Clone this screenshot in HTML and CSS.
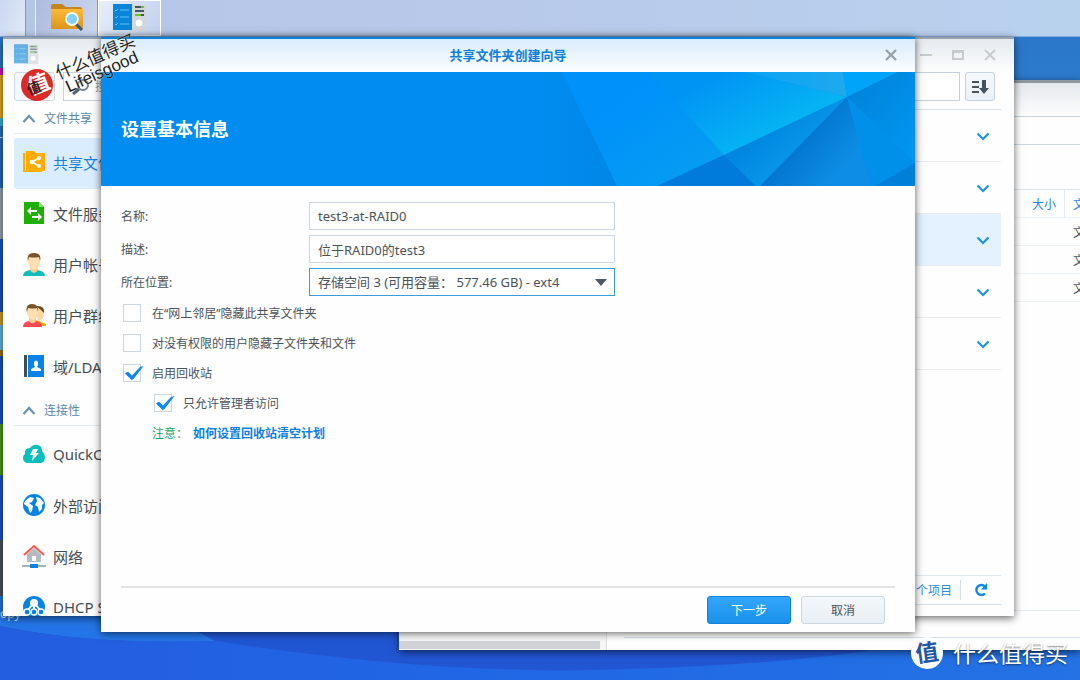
FILE: index.html
```html
<!DOCTYPE html>
<html lang="zh-CN">
<head>
<meta charset="utf-8">
<title>共享文件夹创建向导</title>
<link rel="stylesheet" href="styles.css">
</head>
<body>
<svg class="defs" aria-hidden="true">
  <defs>
    <linearGradient id="folder" x1="0" y1="0" x2="0" y2="1"><stop offset="0" stop-color="#fcb93a"/><stop offset="1" stop-color="#dd951a"/></linearGradient>
    <symbol id="panel" viewBox="0 0 34 28">
      <rect x="17" y="1" width="16" height="26" fill="#d3d7da"/>
      <rect x="0" y="0" width="19" height="26" fill="#0a86d8"/>
      <path d="M2 6l1 1 2-2M2 13l1 1 2-2M2 20l1 1 2-2M7 6h9M7 13h9M7 20h9" stroke="#5cc3f3" stroke-width="1" fill="none"/>
      <path d="M22 3h9M22 7h9M22 11h9" stroke="#485661" stroke-width="2"/>
      <path d="M28 3h3M22 11h6" stroke="#6cc420" stroke-width="2"/>
      <circle cx="26" cy="19" r="4" fill="#fff" stroke="#b9bec2" stroke-width=".6"/>
    </symbol>
    <symbol id="down" viewBox="0 0 14 9"><path d="M1.500 1.500L7 7l5.500-5.500" fill="none" stroke="#1b93ea" stroke-width="2.200"/></symbol>
    <symbol id="up" viewBox="0 0 14 9"><path d="M1.500 8L7 2l5.500 6" fill="none" stroke="#6e93ae" stroke-width="2.200"/></symbol>
    <symbol id="tick" viewBox="0 0 22 20"><path d="M2 9.500q1.500-2 3.500-1.500l3.500 3.500L17 3l3.500-1L10.500 15 8.500 16z" fill="#0d88ee"/></symbol>
  </defs>
</svg>

<div class="desktop">
  <svg class="wallpaper" viewBox="0 0 1080 680" preserveAspectRatio="none" aria-hidden="true">
    <defs>
      <linearGradient id="sky" x1="0" y1="0" x2="0" y2="1"><stop offset="0" stop-color="#2874c8"/><stop offset=".12" stop-color="#2d7bcd"/><stop offset=".4" stop-color="#1552c4"/><stop offset="1" stop-color="#2256d4"/></linearGradient>
      <linearGradient id="sea" x1="0" y1="0" x2="1" y2="0"><stop offset="0" stop-color="#235de0"/><stop offset=".5" stop-color="#2068e5"/><stop offset="1" stop-color="#2472e4"/></linearGradient>
    </defs>
    <rect width="1080" height="680" fill="url(#sky)"/>
    <path d="M0 590H120L215 641Q90 645 0 626z" fill="#2476e8"/>
    <path d="M0 626Q90 645 215 641Q430 674 600 670Q760 666 860 652Q980 630 1080 630V680H0z" fill="url(#sea)"/>
    <g>
      <path d="M0 68h6v7H0z" fill="#d010c8"/><path d="M0 75h6v43H0z" fill="#e8a91c"/><path d="M0 118h6v8H0z" fill="#37b5dc"/>
      <path d="M0 137h6v1H0z" fill="#cfe0f5"/><path d="M0 188h6v51H0z" fill="#9aa5b2"/><path d="M0 312h6v13H0z" fill="#d59a28"/><path d="M0 325h6v25H0z" fill="#66b7e6"/>
      <path d="M0 350h6v6H0z" fill="#a37217"/><path d="M0 424h6v51H0z" fill="#4b9c17"/><path d="M0 540h6v56H0z" fill="#4b5361"/>
    </g>
  </svg>
  <span class="desk-label">opy</span>

  <nav class="taskbar" aria-label="任务栏">
    <button class="task start" aria-label="主菜单"></button>
    <button class="task folder-task" aria-label="File Station">
      <svg width="34" height="28" viewBox="0 0 34 28"><path d="M1 3q0-2 2-2h9l4 3h14q2 0 2 2v18q0 2-2 2H3q-2 0-2-2z" fill="#c9831b"/><path d="M1 6h32v18q0 2-2 2H3q-2 0-2-2z" fill="url(#folder)"/><path d="M26 21l6 6" stroke="#3e5a72" stroke-width="3"/><circle cx="22" cy="16" r="6" fill="#7fd3f6" stroke="#f3f7f9" stroke-width="1.800"/></svg>
    </button>
    <button class="task active" aria-label="控制面板"><svg width="34" height="28"><use href="#panel"/></svg></button>
  </nav>

  <section class="window files">
    <div class="files-title"></div>
    <div class="files-body">
      <div class="tree"><div class="scroll"></div></div>
      <div class="files-main">
        <div class="path"></div>
        <div class="tools"></div>
        <table class="list">
          <thead><tr><th class="grow"></th><th class="size">大小</th><th class="type">文件类型</th></tr></thead>
          <tbody>
            <tr><td></td><td></td><td>文件夹</td></tr>
            <tr><td></td><td></td><td>文件夹</td></tr>
            <tr><td></td><td></td><td>文件夹</td></tr>
          </tbody>
        </table>
        <div class="files-foot"></div>
      </div>
    </div>
  </section>

  <section class="window control">
    <header class="control-title">
      <svg class="faded" width="25" height="21"><use href="#panel"/></svg>
      <div class="win-buttons">
        <button aria-label="最小化"><svg width="14" height="14"><path d="M1 7h12" stroke="#c7cbce" stroke-width="2"/></svg></button>
        <button aria-label="最大化"><svg width="14" height="14"><path d="M2 3h10v8H2zM1 4h12" fill="none" stroke="#c7cbce" stroke-width="2"/></svg></button>
        <button aria-label="关闭窗口"><svg width="14" height="14"><path d="M2 2l10 10M12 2L2 12" stroke="#c7cbce" stroke-width="2"/></svg></button>
      </div>
    </header>
    <div class="control-body">
      <aside class="side">
        <div class="side-search">
          <button class="home" aria-label="主页"><svg width="16" height="16"><path d="M8 2L1 8h2v6h4v-4h3v4h4V8h1z" fill="#48545e"/></svg></button>
          <label class="find"><svg width="20" height="18" viewBox="0 0 20 18"><circle cx="12" cy="7" r="5" fill="none" stroke="#73808a" stroke-width="2"/><path d="M8 11l-6 5" stroke="#56626c" stroke-width="3"/></svg><input type="text" placeholder="搜索" aria-label="搜索"></label>
        </div>
        <h2 class="group"><svg width="14" height="9"><use href="#up"/></svg>文件共享</h2>
        <a class="item chosen" href="#"><svg width="24" height="24"><path d="M1 3h2v17h17v2H1z" fill="#ffb000"/><path d="M4 1h8l2 2h9v18H4z" fill="#ffab00"/><path d="M10 12l7-4M10 12l7 4" stroke="#fff" stroke-width="1.500"/><g fill="#fff"><circle cx="10" cy="12" r="2.300"/><circle cx="17" cy="8" r="2"/><circle cx="17" cy="16" r="2"/></g></svg>共享文件夹</a>
        <a class="item" href="#"><svg width="24" height="24"><path d="M2 1h15l5 5v17H2z" fill="#1faf00"/><path d="M17 1v5h5z" fill="#8ed97c"/><path d="M5 10l4-4v3h6v2H9v3zM20 16l-4-4v3h-6v2h6v3z" fill="#fff"/></svg>文件服务</a>
        <a class="item" href="#"><svg width="24" height="24"><path d="M1 24q0-5 7-6h7q8 1 8 6z" fill="#13bdbd"/><path d="M8 14h8v4q-4 6-8 0z" fill="#f4cb92"/><path d="M6 5q6-6 12 0v6q-2 7-6 7t-6-7z" fill="#ffdfb0"/><path d="M6 9Q4 1 12 1t6 8l-1-4q-5 1-10 0z" fill="#795226"/></svg>用户帐号</a>
        <a class="item" href="#"><svg width="24" height="24"><path d="M14 17l10 4v2H12z" fill="#ffa800"/><path d="M14 6q8-4 8 3 0 9-6 9z" fill="#ffd6a0"/><path d="M14 3q9-1 8 7l-3-3z" fill="#6b4521"/><path d="M1 24q0-5 6-6h6q7 1 7 6z" fill="#ff4751"/><path d="M7 14h7v4q-4 5-7 0z" fill="#f4cb92"/><path d="M5 5q6-5 11 0v6q-2 6-5 6t-6-6z" fill="#ffdfb0"/><path d="M5 9Q3 1 10 1t6 8l-1-4q-4 1-9 0z" fill="#795226"/></svg>用户群组</a>
        <a class="item" href="#"><svg width="24" height="24"><path d="M2 1h3v22H2z" fill="#3f4d5a"/><path d="M6 1h16v22H6z" fill="#0a83e8"/><path d="M9 17v-2l4-2-1-2V8q2-3 4 0v3l-1 2 4 2v2z" fill="#fff"/></svg>域/LDAP</a>
        <h2 class="group"><svg width="14" height="9"><use href="#up"/></svg>连接性</h2>
        <a class="item" href="#"><svg width="24" height="24"><path d="M5 21q-4-1-4-5 0-3 2-4-1-6 5-6 3-4 8-3 4 1 4 6 3 3 3 6 0 5-4 6z" fill="#08c0bb"/><path d="M11 7h5l-2 4h3l-7 8 1-6H8z" fill="#fff"/></svg>QuickConnect</a>
        <a class="item" href="#"><svg width="24" height="24"><circle cx="12" cy="12" r="11" fill="#0783e5"/><path d="M3 8l5-4 4 1-2 4-3 1 4 3-1 5-2 2-2-6-4-3zM14 4l4 1 4 5-2 2 0 4-3 3-1-5-3-2 2-4z" fill="#fff"/></svg>外部访问</a>
        <a class="item" href="#"><svg width="24" height="24"><path d="M5 10l7-6 7 6v8H5z" fill="#b4bcc3"/><path d="M2 11L12 2l10 9" fill="none" stroke="#ff554f" stroke-width="2"/><path d="M10 12h4v5h-4z" fill="#fff"/><path d="M0 22h24" stroke="#aab3bb" stroke-width="2"/><rect x="8" y="20" width="8" height="4" fill="#0a83e8"/></svg>网络</a>
        <a class="item" href="#"><svg width="24" height="24"><circle cx="12" cy="12" r="11" fill="#0783e5"/><circle cx="12" cy="8" r="4" fill="#fff"/><path d="M10 10l-4 5M12 10v5M14 10l4 5" stroke="#fff" stroke-width="2"/><g fill="#0783e5" stroke="#fff" stroke-width="1.300"><circle cx="5" cy="17" r="3"/><circle cx="12" cy="17" r="3"/><circle cx="19" cy="17" r="3"/></g></svg>DHCP Server</a>
      </aside>
      <div class="content">
        <div class="filter">
          <input class="filter-input" type="text" aria-label="筛选">
          <button class="sort" aria-label="排序"><svg width="18" height="16"><path d="M1 3h7M1 8h7M1 13h7" stroke="#46525c" stroke-width="2"/><path d="M11 1h4v8h3l-5 6-5-6h3z" fill="#46525c"/></svg></button>
        </div>
        <div class="rows">
          <button class="row" aria-label="展开"><svg width="14" height="9"><use href="#down"/></svg></button>
          <button class="row" aria-label="展开"><svg width="14" height="9"><use href="#down"/></svg></button>
          <button class="row picked" aria-label="展开"><svg width="14" height="9"><use href="#down"/></svg></button>
          <button class="row" aria-label="展开"><svg width="14" height="9"><use href="#down"/></svg></button>
          <button class="row" aria-label="展开"><svg width="14" height="9"><use href="#down"/></svg></button>
        </div>
        <footer class="count"><span>个项目</span><button class="reload" aria-label="刷新"><svg width="14" height="14"><path d="M11 10.500A5 5 0 1 1 11 3.500" fill="none" stroke="#1088e5" stroke-width="2.400"/><path d="M13 0v6.500H7z" fill="#1088e5"/></svg></button></footer>
      </div>
    </div>
  </section>

  <form class="window wizard" role="dialog" aria-labelledby="wizard-title">
    <header class="wizard-title">
      <h1 id="wizard-title">共享文件夹创建向导</h1>
      <button class="close" type="button" aria-label="关闭"><svg width="14" height="14"><path d="M2 2l10 10M12 2L2 12" stroke="#98a1a7" stroke-width="2.400"/></svg></button>
    </header>
    <div class="banner">
      <h2>设置基本信息</h2>
      <svg width="375" height="114" viewBox="0 0 375 114" aria-hidden="true">
        <defs>
          <linearGradient id="g1" x1="0" y1="0" x2="1" y2="0"><stop offset="0" stop-color="#008cf0"/><stop offset="1" stop-color="#0087e6"/></linearGradient>
          <linearGradient id="g2" x1="0" y1="0" x2="1" y2="1"><stop offset=".3" stop-color="#0091fa"/><stop offset="1" stop-color="#079ff0"/></linearGradient>
          <linearGradient id="g3" gradientUnits="userSpaceOnUse" x1="180" y1="0" x2="220" y2="75"><stop offset="0" stop-color="#0094f4"/><stop offset="1" stop-color="#06b6f3"/></linearGradient>
          <linearGradient id="g4" x1="0" y1="0" x2="1" y2="0"><stop offset="0" stop-color="#0ca2f5"/><stop offset="1" stop-color="#1daaee"/></linearGradient>
          <linearGradient id="g5" gradientUnits="userSpaceOnUse" x1="220" y1="60" x2="250" y2="95"><stop offset="0" stop-color="#0086df"/><stop offset="1" stop-color="#0898ea"/></linearGradient>
          <linearGradient id="g6" gradientUnits="userSpaceOnUse" x1="240" y1="70" x2="290" y2="112"><stop offset="0" stop-color="#0070ca"/><stop offset="1" stop-color="#0d8de5"/></linearGradient>
          <linearGradient id="g7" x1="0" y1="0" x2="1" y2="1"><stop offset="0" stop-color="#0082d8"/><stop offset="1" stop-color="#0097f2"/></linearGradient>
        </defs>
        <path d="M0 0H22L77 114H0z" fill="url(#g1)"/>
        <path d="M22 0H108L184 83 117 114H77z" fill="url(#g2)"/>
        <path d="M108 0H205L307 25 184 83z" fill="url(#g3)"/>
        <path d="M205 0H303L307 25z" fill="url(#g4)"/>
        <path d="M303 0H358L307 25z" fill="#00a5fa"/>
        <path d="M117 114L184 83 216 114z" fill="#007bdc"/>
        <path d="M184 83L307 25 220 114H216z" fill="url(#g5)"/>
        <path d="M307 25L220 114H331z" fill="url(#g6)"/>
        <path d="M307 25L331 114H335L375 92V90z" fill="#0090ea"/>
        <path d="M307 25L358 0H375V90z" fill="url(#g7)"/>
        <path d="M335 114L375 91V114z" fill="#007fd9"/>
      </svg>
    </div>
    <div class="fields">
      <label for="name">名称:</label><input id="name" class="field" type="text" value="test3-at-RAID0">
      <label for="desc">描述:</label><input id="desc" class="field" type="text" value="位于RAID0的test3">
      <label for="place">所在位置:</label>
      <div class="pick">
        <select id="place" class="field focus"><option>存储空间 3 (可用容量： 577.46 GB) - ext4</option></select>
        <svg class="caret" width="12" height="7"><path d="M0 0h12L6 7z" fill="#4d5a66"/></svg>
      </div>
    </div>
    <div class="checks">
      <label class="check"><span class="box"><input type="checkbox"><svg width="22" height="20"><use href="#tick"/></svg></span>在“网上邻居”隐藏此共享文件夹</label>
      <label class="check"><span class="box"><input type="checkbox"><svg width="22" height="20"><use href="#tick"/></svg></span>对没有权限的用户隐藏子文件夹和文件</label>
      <label class="check"><span class="box"><input type="checkbox" checked><svg width="22" height="20"><use href="#tick"/></svg></span>启用回收站</label>
      <label class="check nested"><span class="box"><input type="checkbox" checked><svg width="22" height="20"><use href="#tick"/></svg></span>只允许管理者访问</label>
      <p class="note"><span>注意：</span><a href="#">如何设置回收站清空计划</a></p>
    </div>
    <footer class="actions">
      <button class="btn primary" type="button">下一步</button>
      <button class="btn" type="button">取消</button>
    </footer>
  </form>

  <div class="stamp">
    <svg width="36" height="36" aria-hidden="true"><circle cx="18" cy="19" r="16" fill="#dc2a29"/></svg>
    <span class="stamp-char">值</span>
    <span class="stamp-ghost">值</span>
    <div class="stamp-text"><span>什么值得买</span><span class="latin">Lifeisgood</span></div>
  </div>
  <div class="brand"><span class="brand-disc">值</span><span>什么值得买</span></div>
</div>
</body>
</html>
```

FILE: styles.css
```css
* { box-sizing: border-box; }
body {
  margin: 0;
  font-family: "Noto Sans", "Noto Sans CJK SC", sans-serif;
  font-size: 12px;
  color: #4a5259;
}
h1, h2, p { margin: 0; }
a { text-decoration: none; color: inherit; }
button, input, select { font: inherit; color: inherit; padding: 0; margin: 0; }
button { border: 0; background: none; display: flex; align-items: center; justify-content: center; }
svg { display: block; flex: none; }
.defs { position: absolute; width: 0; height: 0; }

.desktop { position: relative; height: 100vh; min-height: 480px; overflow: hidden; }
.wallpaper { position: absolute; inset: 0; width: 100%; height: 100%; }
.desk-label { position: absolute; left: 0; top: 606px; font-size: 12px; line-height: 16px; color: #dfe9f8; }

.taskbar {
  position: relative;
  display: flex;
  height: 37px;
  background: linear-gradient(90deg, #b5c5e6, #b9cbea 60%, #b8d2ee);
  border-bottom: 1px solid #86abdc;
}
.task { border-right: 1px solid #8794b4; }
.task.start { width: 26px; background: linear-gradient(110deg, #c9d7f0, #e2eaf8); margin-right: 9px; }
.task.folder-task { width: 63px; background: linear-gradient(110deg, #adbbdc, #ccd7ef); border-left: 1px solid #e7edf9; padding-bottom: 2px; }
.task.active { width: 63px; background: linear-gradient(120deg, #e8effa, #c3d0ec); border: 1px solid #fff; }

.window { position: absolute; background: #fefefe; display: flex; flex-direction: column; box-shadow: 0 2px 8px rgba(0, 0, 0, .6); }

.files { left: 399px; right: 0; top: 80px; bottom: 30px; border-top: 3px solid #8f979f; }
.files-title { height: 34px; background: linear-gradient(#e4e8ed, #fdfdfd); border-bottom: 1px solid #c7d3df; }
.files-body { flex: 1; display: flex; min-height: 0; }
.tree { width: 208px; display: flex; align-items: flex-end; background: #f6f6f6; border-right: 1px solid #dcdfe2; padding-bottom: 1px; }
.scroll { width: 201px; height: 8px; background: #d0d3d5; }
.files-main { flex: 1; min-width: 0; display: flex; flex-direction: column; overflow: hidden; }
.path { height: 28px; border-bottom: 1px solid #ccd7e2; }
.tools { height: 45px; border-bottom: 1px solid #dae4ed; }
.list { width: 100%; table-layout: fixed; border-spacing: 0; }
.list th, .list td { height: 28px; padding: 2px 0 0; border-bottom: 1px solid #eaf0f5; text-align: left; white-space: nowrap; overflow: hidden; font-weight: 400; line-height: 18px; }
.list th { color: #1887e5; border-right: 1px solid #e1ebf4; }
.list .size { width: 56px; padding-left: 23px; }
.list .type { width: 15px; padding-left: 8px; border-right: 0; }
.list td:last-child { padding-left: 8px; }
.files-foot { margin: auto 0 12px 17px; height: 28px; border-top: 1px solid #e2eaf2; border-bottom: 1px solid #d4dfe9; }

.control { left: 3px; right: 66px; top: 37px; bottom: 64px; border-top: 2px solid #9aa3ac; }
.control-title { display: flex; justify-content: space-between; align-items: center; height: 33px; padding: 0 17px 2px 11px; background: linear-gradient(#e5eaf0, #fdfdfd); }
.faded { opacity: .6; }
.win-buttons { display: flex; gap: 18px; }
.control-body { flex: 1; display: flex; min-height: 0; padding-left: 11px; }
.side { width: 240px; overflow: hidden; font-size: 15px; }
.side-search { display: flex; gap: 8px; height: 29px; }
.home { width: 41px; border: 1px solid #d0dae5; border-radius: 3px; background: #f5f8fb; }
.find { flex: 1; display: flex; align-items: center; gap: 4px; padding-left: 7px; border: 1px solid #c8d2de; }
.find input { width: 100px; border: 0; background: none; font-size: 12px; }
.find input::placeholder { color: #8b949b; }
.group { display: flex; align-items: center; gap: 8px; height: 33px; margin-bottom: 4px; padding: 2px 0 0 8px; border-bottom: 1px solid #e6ebf0; font-size: 12px; font-weight: 400; color: #5b88a8; }
.item { display: flex; align-items: center; gap: 7px; height: 51px; padding: 0 0 3px 8px; white-space: nowrap; color: #454d54; }
.chosen { background: #d9edff; color: #1a7fd6; border-radius: 3px; }
.content { flex: 1; display: flex; flex-direction: column; padding: 0 13px 11px 20px; }
.filter { display: flex; gap: 5px; height: 38px; padding: 0 6px 8px 0; border-bottom: 1px solid #dbe3ea; }
.filter-input { flex: 1; min-width: 0; border: 1px solid #c5d0dc; background: #fff; }
.sort { width: 30px; border: 1px solid #c4d1df; border-radius: 3px; background: linear-gradient(#f6f9fc, #e9f0f6); }
.rows { display: flex; flex-direction: column; }
.row { height: 52px; justify-content: flex-end; padding: 2px 11px 0 0; border-bottom: 1px solid #e8ecef; }
.picked { background: #e3f2fe; }
.count { display: flex; align-items: center; justify-content: flex-end; height: 30px; margin-top: auto; border-top: 1px solid #e0e8ef; border-bottom: 1px solid #d5dfe8; color: #2a8ddc; }
.reload { width: 41px; height: 20px; margin-left: 8px; border-left: 1px solid #d5dfe8; }

.wizard { left: 101px; right: 165px; top: 37px; bottom: 48px; border-top: 2px solid #0a83e0; box-shadow: 0 1px 8px rgba(0, 0, 0, .65); }
.wizard-title { display: grid; grid-template-columns: 34px 1fr 34px; align-items: center; height: 33px; padding: 0 7px 2px; background: linear-gradient(#d9ecfb, #fbfdff); }
.wizard-title h1 { grid-column: 2; text-align: center; font-size: 13px; line-height: 18px; font-weight: 700; color: #0b80dd; }
.banner { display: flex; align-items: center; justify-content: space-between; height: 114px; padding-left: 20px; overflow: hidden; background: #008cf0; }
.banner h2 { font-size: 18px; line-height: 26px; color: #fff; white-space: nowrap; }
.fields { display: grid; grid-template-columns: 188px 306px; grid-auto-rows: 28px; gap: 5px 0; align-items: center; padding: 16px 20px 0; }
.field { width: 100%; height: 28px; padding: 0 8px; border: 1px solid #cdd7e1; border-radius: 0; background: #fff; outline: 0; font-size: 13px; }
.focus { border-color: #3e9be0; appearance: none; }
.pick { position: relative; }
.caret { position: absolute; right: 8px; top: 11px; pointer-events: none; }
.checks { padding: 2px 22px 0; }
.check { display: flex; align-items: center; gap: 11px; height: 30px; }
.nested { padding-left: 31px; }
.box { display: grid; width: 18px; height: 18px; }
.box input, .box svg { grid-area: 1 / 1; }
.box input { appearance: none; width: 18px; height: 18px; border: 1px solid #ccd6e1; background: #fff; }
.box svg { visibility: hidden; pointer-events: none; z-index: 1; }
.box input:checked + svg { visibility: visible; }
.note { display: flex; align-items: center; gap: 5px; height: 30px; padding-left: 29px; color: #1fa563; }
.note a { color: #0b80e2; font-weight: 700; }
.actions { display: flex; justify-content: flex-end; gap: 10px; margin: auto 20px 8px; padding: 8px 10px 0; border-top: 2px solid #e2e3e4; }
.btn { width: 84px; height: 28px; border: 1px solid #cbd6e1; border-radius: 3px; background: linear-gradient(#f4f8fc, #e8eef4); }
.primary { border-color: #0e80dc; background: linear-gradient(#32a6fb, #1a92ea); color: #fff; }

.stamp { position: absolute; left: 19px; top: 66px; pointer-events: none; }
.stamp-char, .stamp-ghost { position: absolute; line-height: 28px; transform: rotate(-21deg); }
.stamp-char { left: 8px; top: 3px; font-size: 22px; font-weight: 700; color: #fff; }
.stamp-ghost { left: 8px; top: 8px; font-size: 14px; font-weight: 700; color: #3b1d1d; }
.stamp-text { position: absolute; left: 37px; top: -19px; display: flex; flex-direction: column; align-items: center; transform: rotate(-24deg); font-size: 17px; line-height: 17px; color: #1d1f21; white-space: nowrap; text-shadow: 0 0 1px #fff; }
.latin { font-family: "Liberation Sans", sans-serif; }
.brand { position: absolute; right: 12px; bottom: 10px; display: flex; align-items: center; gap: 10px; font-size: 23px; line-height: 34px; color: #fff; text-shadow: 0 1px 2px rgba(0, 0, 0, .5); }
.brand-disc { width: 32px; height: 32px; border-radius: 50%; background: #fff; color: #1f58a8; font-weight: 700; line-height: 30px; text-align: center; text-shadow: none; transform: rotate(-8deg); }
```
